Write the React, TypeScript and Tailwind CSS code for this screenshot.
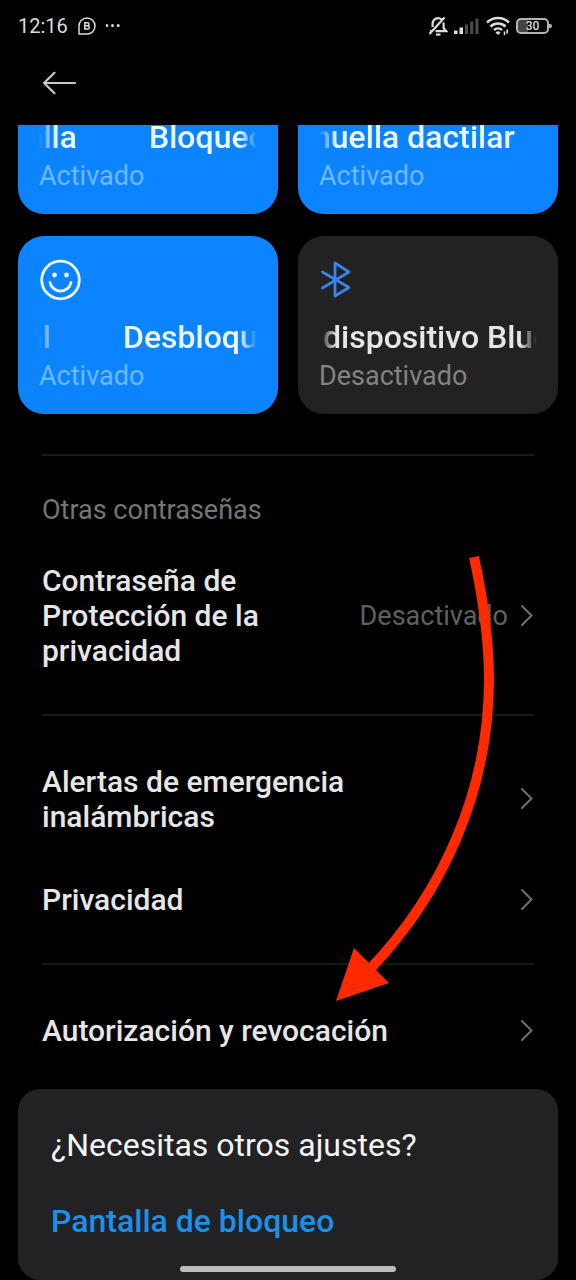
import type { ReactNode } from "react";
import { clsx } from "clsx";

interface UnlockCardProps {
  active?: boolean;
  icon?: ReactNode;
  status: string;
  children: ReactNode;
}

function UnlockCard({ active, icon, status, children }: UnlockCardProps) {
  return (
    <button
      type="button"
      className={clsx(
        "flex min-w-0 flex-col rounded-[26px] px-[21px] pt-6 pb-[22px] text-left",
        active ? "bg-[#0d84ff] text-[#eaf6ff]" : "bg-[#222222] text-[#e6e6e6]"
      )}
    >
      <span className="flex h-10 items-center">{icon}</span>
      <span className="mt-[18px] flex w-full overflow-hidden text-[32px] leading-[38px] font-medium whitespace-nowrap mask-x-from-[92%] mask-x-to-100%">
        {children}
      </span>
      <span
        className={clsx(
          "mt-1 text-[27px] leading-8",
          active ? "text-[#6db8ff]" : "text-[#838383]"
        )}
      >
        {status}
      </span>
    </button>
  );
}

// Two copies of a scrolling title: the end of one and the start of the next
function Marquee({ tail, head, wide }: { tail: string; head: string; wide?: boolean }) {
  return (
    <>
      <span className={clsx("flex shrink-0 justify-end", wide ? "w-[38px]" : "w-3")}>{tail}</span>
      <span className="ml-[72px]">{head}</span>
    </>
  );
}

function Chevron() {
  return (
    <svg className="h-6 w-4 shrink-0" viewBox="0 0 16 24" fill="none" stroke="#707070" strokeWidth="2">
      <path d="M4 2L13.500 11.500L4 21" strokeLinecap="round" />
    </svg>
  );
}

function SettingRow({ value, children }: { value?: string; children: ReactNode }) {
  return (
    <button type="button" className="flex w-full items-center justify-between text-left">
      <span className="text-[30px] leading-[35px] font-medium text-[#e6e6e6]">{children}</span>
      <span className="flex items-center gap-[10px]">
        {value && <span className="text-[27px] leading-8 text-[#606060]">{value}</span>}
        <Chevron />
      </span>
    </button>
  );
}

function StatusBar() {
  return (
    <div className="flex h-[52px] items-center justify-between pr-6 pl-[18px] text-[#dcdcdc]">
      <div className="flex items-center gap-[10px]">
        <span className="text-[20px] leading-6">12:16</span>
        <svg className="h-[18px] w-[18px]" viewBox="0 0 18 18" fill="none" stroke="currentColor">
          <path d="M1 17V9a8 8 0 1 1 8 8Z" strokeWidth="1.500" strokeLinejoin="round" />
          <path
            d="M6.800 5.800h2.600a1.500 1.500 0 0 1 0 3H6.800zM6.800 8.800h2.900a1.600 1.600 0 0 1 0 3.200H6.800z"
            strokeWidth="1.500"
          />
        </svg>
        <svg className="h-[18px] w-4" viewBox="0 0 16 18" fill="currentColor">
          <circle cx="0.800" cy="8.500" r="1.500" />
          <circle cx="6.500" cy="8.500" r="1.500" />
          <circle cx="12.200" cy="8.500" r="1.500" />
        </svg>
      </div>
      <div className="flex items-center gap-[6px]">
        <svg className="h-5 w-5" viewBox="0 0 20 20" fill="none" stroke="currentColor" strokeWidth="2.200">
          <path d="M13.500 3.400A5.500 5.500 0 0 0 4.600 7.800V11M7.500 15.200H18.200L15.600 12.200V6.500M1.500 18L16.500 1.500M2 15.200H3.500" />
          <path d="M8 18.600h4.500" />
        </svg>
        <svg className="h-5 w-[26px]" viewBox="0 0 26 20" fill="currentColor">
          <path d="M0 14.500h3.500V18H0zM5.500 11.500H9V18H5.500z" />
          <path d="M11 8.500h3V18h-3zM16.200 5.500h3V18h-3zM21.500 2.500h3V18h-3z" fill="#4c4c4c" />
        </svg>
        <svg className="h-5 w-6" viewBox="0 0 24 20" fill="none" stroke="currentColor" strokeWidth="2.500">
          <path d="M1 6.500a16 16 0 0 1 22 0M4.500 10.500a11 11 0 0 1 15 0M8 14a6 6 0 0 1 8 0" />
          <path d="M9.500 16.500a3.500 3.500 0 0 1 5 0L12 19z" fill="currentColor" stroke="none" />
          <path d="M18.500 15.500v3.500M21.200 13.500v4" strokeWidth="1.600" />
        </svg>
        <div className="flex items-center">
          <div className="flex h-4 w-[33px] items-center justify-center rounded-[5px] border-2 border-[#b4b4b4] bg-linear-to-r from-[#444444] from-35% to-black to-35% text-[12px] leading-3 font-medium">
            30
          </div>
          <div className="h-1 w-[3px] rounded-r-sm bg-[#b4b4b4]" />
        </div>
      </div>
    </div>
  );
}

function Divider() {
  return <hr className="h-[2px] border-0 bg-[#191919]" />;
}

export default function App() {
  return (
    <div className="relative min-h-screen overflow-hidden bg-black font-[Roboto,sans-serif]">
      <StatusBar />
      <header className="flex h-[73px] px-[42px] pt-[19px]">
        <button type="button" aria-label="Atrás" className="h-6">
          <svg className="h-6 w-[35px]" viewBox="0 0 35 24" fill="none" stroke="#c8c8c8" strokeWidth="2.200">
            <path d="M33 12H2M12.500 1.800L2 12L12.500 22.200" strokeLinecap="round" strokeLinejoin="round" />
          </svg>
        </button>
      </header>

      <main>
        {/* first row is scrolled halfway under the header */}
        <div className="grid h-[89px] grid-cols-2 content-end gap-x-5 overflow-hidden px-[18px]">
          <UnlockCard active status="Activado">
            <Marquee tail="alla" head="Bloqueo" wide />
          </UnlockCard>
          <UnlockCard active status="Activado">
            <span className="-ml-[6px]">huella dactilar</span>
          </UnlockCard>
        </div>
        <div className="mt-[22px] grid grid-cols-2 gap-x-5 px-[18px]">
          <UnlockCard
            active
            status="Activado"
            icon={
              <svg className="h-[42px] w-[42px]" viewBox="0 0 42 42" fill="none" stroke="currentColor">
                <circle cx="21.500" cy="21" r="18.800" strokeWidth="2.800" />
                <path d="M11 23.500a10.700 10.700 0 0 0 21 0" strokeWidth="2.800" strokeLinecap="round" />
                <circle cx="15.500" cy="16" r="2.400" fill="currentColor" stroke="none" />
                <circle cx="27.500" cy="16" r="2.400" fill="currentColor" stroke="none" />
              </svg>
            }
          >
            <Marquee tail="al" head="Desbloqueo" />
          </UnlockCard>
          <UnlockCard
            status="Desactivado"
            icon={
              <svg className="h-10 w-8" viewBox="0 0 32 40" fill="none" stroke="#3a82f0" strokeWidth="2.800">
                <path
                  d="M3.500 12L30 27.500L16 36V3L30 12L3.500 28"
                  strokeLinecap="round"
                  strokeLinejoin="round"
                />
              </svg>
            }
          >
            <span className="ml-1">dispositivo Bluetooth</span>
          </UnlockCard>
        </div>

        <div className="px-[42px] pt-10">
          <Divider />
          <h2 className="mt-[38px] text-[27px] leading-8 text-[#757575]">Otras contraseñas</h2>
          <div className="pt-[37px] pb-[46px]">
            <SettingRow value="Desactivado">
              Contraseña de
              <br />
              Protección de la
              <br />
              privacidad
            </SettingRow>
          </div>
          <Divider />
          <div className="flex flex-col gap-12 pt-12 pb-[46px]">
            <SettingRow>
              Alertas de emergencia
              <br />
              inalámbricas
            </SettingRow>
            <SettingRow>Privacidad</SettingRow>
          </div>
          <Divider />
          <div className="pt-12 pb-[41px]">
            <SettingRow>Autorización y revocación</SettingRow>
          </div>
        </div>

        <section className="mx-[18px] rounded-[22px] bg-[#222224] px-[33px] pt-[37px] pb-10">
          <h2 className="text-[32px] leading-[38px] text-[#f4f4f4]">¿Necesitas otros ajustes?</h2>
          <a href="#bloqueo" className="mt-[38px] block text-[32px] leading-[38px] font-medium text-[#1c90e8]">
            Pantalla de bloqueo
          </a>
        </section>
      </main>

      {/* hand-drawn pointer to the last setting */}
      <svg
        className="pointer-events-none absolute top-[550px] right-[76px] h-[460px] w-[170px]"
        viewBox="330 550 170 460"
        fill="none"
      >
        <path
          d="M474 557C483 598 489 640 489 680C489 790 443 893 370 969"
          stroke="#ff2a00"
          strokeWidth="10"
        />
        <path d="M336 1001L354 948L389 983Z" fill="#ff2a00" />
      </svg>

      <div className="absolute inset-x-0 bottom-2 flex justify-center">
        <div className="h-[6px] w-[216px] rounded-full bg-[#bdbdbf]" />
      </div>
    </div>
  );
}
